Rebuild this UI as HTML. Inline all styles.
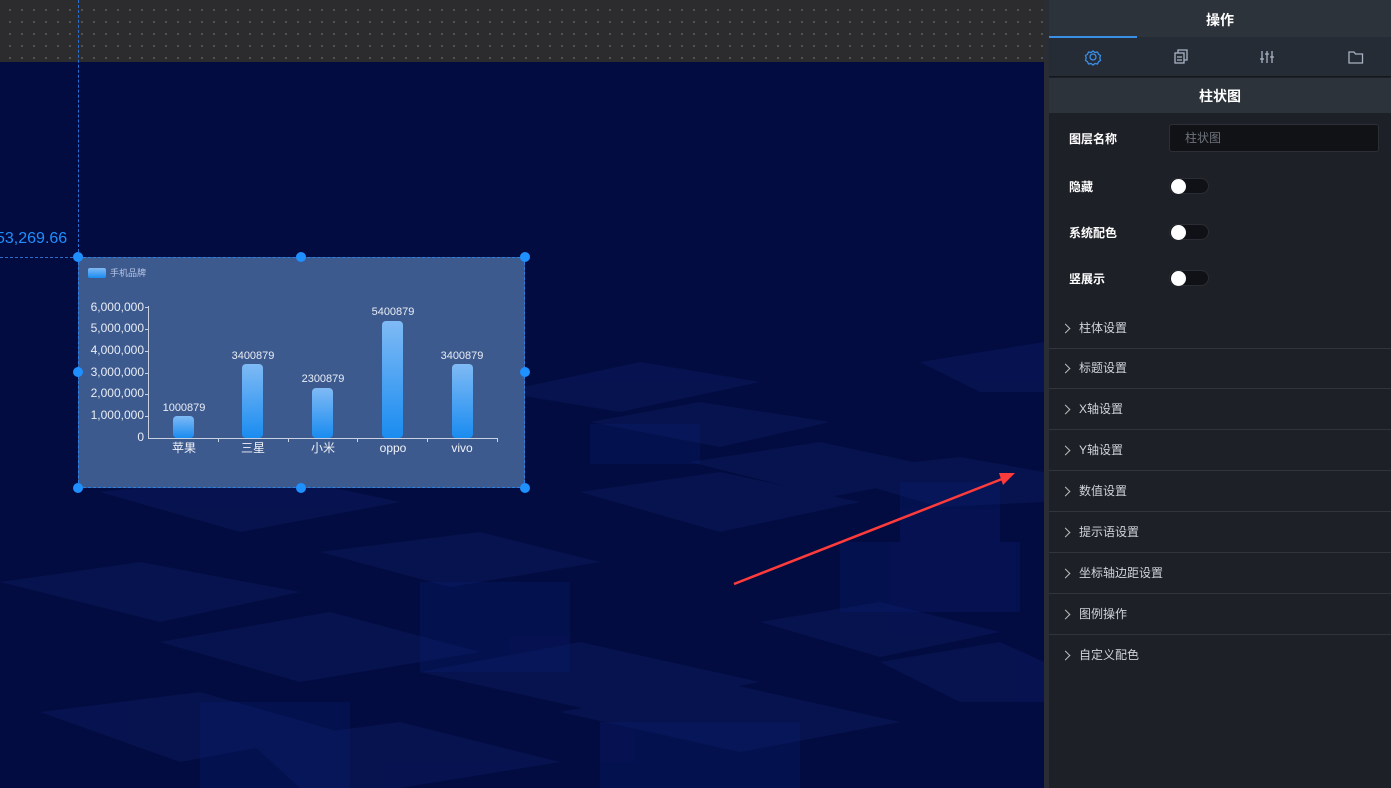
<!DOCTYPE html>
<html><head><meta charset="utf-8"><style>
*{margin:0;padding:0;box-sizing:border-box}
body{width:1391px;height:788px;overflow:hidden;position:relative;background:#030c40;font-family:"Liberation Sans","Noto Sans CJK SC",sans-serif}
.abs{position:absolute}
#top{left:0;top:0;width:1044px;height:62px;background-color:#2c2c2e;background-image:radial-gradient(#555 1px,transparent 1.2px);background-size:12px 12px;background-position:4px 4px}
#strip{left:1044px;top:0;width:5px;height:788px;background:#2a2d33}
#panel{left:1049px;top:0;width:342px;height:788px;background:#1e2027;color:#fff}
.hdr{position:absolute;left:0;top:0;width:342px;height:37px;background:#2d333b;text-align:center;line-height:40px;font-size:14px;font-weight:bold}
.tabs{position:absolute;left:0;top:37px;width:342px;height:40px;background:#262c35;border-bottom:1px solid #15181c}
.sec{position:absolute;left:0;top:78px;width:342px;height:35px;background:#2d333b;text-align:center;line-height:36px;font-size:14px;font-weight:bold}
.lbl{position:absolute;left:20px;font-size:12px;font-weight:bold}
.tog{position:absolute;left:120px;width:40px;height:16px;border-radius:8px;background:#101116;border:1px solid #2a2d33}
.tog:before{content:"";position:absolute;left:1px;top:0;width:15px;height:15px;border-radius:50%;background:#fff}
.row{position:absolute;left:0;width:342px;height:41px;border-bottom:1px solid #30343c;font-size:12px;color:#cfd3da;line-height:41px;padding-left:30px}
.row:before{content:"";position:absolute;left:13px;top:17px;width:6px;height:6px;border-right:1.3px solid #bbb;border-top:1.3px solid #bbb;transform:rotate(45deg)}
.h{position:absolute;width:10px;height:10px;border-radius:50%;background:#1e90ff}
</style></head><body>
<svg class="abs" style="left:0;top:62px" width="1044" height="726">
<g fill="#0a1a5c" opacity=".55">
<polygon points="500,330 640,300 760,320 620,350"/>
<polygon points="590,360 700,340 830,360 720,385"/>
<polygon points="690,400 820,380 960,410 830,435"/>
<polygon points="820,410 960,395 1044,410 1044,440 940,445"/>
<polygon points="0,520 140,500 300,530 160,560"/>
<polygon points="160,580 330,550 480,590 300,620"/>
<polygon points="320,490 480,470 600,500 450,525"/>
<polygon points="420,610 580,580 760,620 600,650"/>
<polygon points="560,650 720,620 900,660 740,690"/>
<polygon points="40,650 200,630 340,670 180,700"/>
<polygon points="250,680 400,660 560,700 400,726 300,726"/>
<polygon points="760,560 880,540 1000,570 880,595"/>
<polygon points="880,600 1000,580 1044,600 1044,640 960,640"/>
<polygon points="100,430 260,410 400,440 240,470"/>
<polygon points="580,430 720,410 860,440 720,470"/>
<polygon points="920,300 1044,280 1044,330 980,330"/>
</g>
<g fill="#0a1d6e" opacity=".35">
<rect x="590" y="362" width="110" height="40"/>
<rect x="900" y="420" width="100" height="60"/>
<rect x="420" y="520" width="150" height="90"/>
<rect x="840" y="480" width="180" height="70"/>
<rect x="200" y="640" width="150" height="86"/>
<rect x="600" y="660" width="200" height="66"/>
</g>
</svg>
<div id="top" class="abs"></div>
<div class="abs" style="left:78px;top:0;width:0;height:257px;border-left:1px dashed #2a6fd0"></div>
<div class="abs" style="left:0;top:257px;width:78px;height:0;border-top:1px dashed #2a6fd0"></div>
<div class="abs" style="left:-4px;top:230px;color:#1e8fff;font-size:16px">53,269.66</div>
<div class="abs" style="left:78px;top:257px;width:447px;height:231px;background:#3d5a8e;border:1px dashed #2a7fe0"></div>
<svg class="abs" style="left:0;top:0" width="600" height="500" font-family="Liberation Sans,Noto Sans CJK SC,sans-serif">
<defs><linearGradient id="g" x1="0" y1="0" x2="0" y2="1"><stop offset="0" stop-color="#7fbaf5"/><stop offset="1" stop-color="#1a8cf0"/></linearGradient></defs>
<rect x="88" y="268" width="18" height="10" rx="2" fill="url(#g)"/>
<text x="110" y="276" font-size="9" fill="#b8c8e8">手机品牌</text>
<g font-size="12" fill="#e8edf5" text-anchor="end">
<text x="144" y="311">6,000,000</text><text x="144" y="332">5,000,000</text><text x="144" y="354">4,000,000</text><text x="144" y="376">3,000,000</text><text x="144" y="397">2,000,000</text><text x="144" y="419">1,000,000</text><text x="144" y="441">0</text></g>
<g stroke="#c8d2e0"><line x1="148.5" y1="306" x2="148.5" y2="438"/><line x1="148" y1="438.5" x2="497" y2="438.5"/>
<line x1="145" y1="307.5" x2="148" y2="307.5"/><line x1="145" y1="329.5" x2="148" y2="329.5"/><line x1="145" y1="351.5" x2="148" y2="351.5"/><line x1="145" y1="373.5" x2="148" y2="373.5"/><line x1="145" y1="394.5" x2="148" y2="394.5"/><line x1="145" y1="416.5" x2="148" y2="416.5"/>
<line x1="218.5" y1="438" x2="218.5" y2="442"/><line x1="288.5" y1="438" x2="288.5" y2="442"/><line x1="357.5" y1="438" x2="357.5" y2="442"/><line x1="427.5" y1="438" x2="427.5" y2="442"/><line x1="497.5" y1="438" x2="497.5" y2="442"/></g>
<g fill="url(#g)"><rect x="173" y="416" width="21" height="22" rx="4"/><rect x="242" y="364" width="21" height="74" rx="4"/><rect x="312" y="388" width="21" height="50" rx="4"/><rect x="382" y="321" width="21" height="117" rx="4"/><rect x="452" y="364" width="21" height="74" rx="4"/></g>
<g font-size="11" fill="#e8edf5" text-anchor="middle"><text x="184" y="411">1000879</text><text x="253" y="359">3400879</text><text x="323" y="382">2300879</text><text x="393" y="315">5400879</text><text x="462" y="359">3400879</text></g>
<g font-size="12" fill="#f0f3f8" text-anchor="middle"><text x="184" y="452">苹果</text><text x="253" y="452">三星</text><text x="323" y="452">小米</text><text x="393" y="452">oppo</text><text x="462" y="452">vivo</text></g>
</svg>
<div class="h" style="left:73px;top:252px"></div><div class="h" style="left:296px;top:252px"></div><div class="h" style="left:520px;top:252px"></div>
<div class="h" style="left:73px;top:367px"></div><div class="h" style="left:520px;top:367px"></div>
<div class="h" style="left:73px;top:483px"></div><div class="h" style="left:296px;top:483px"></div><div class="h" style="left:520px;top:483px"></div>
<svg class="abs" style="left:0;top:0" width="1044" height="788"><line x1="734" y1="584" x2="1002" y2="479" stroke="#ff3b3b" stroke-width="2.5"/><polygon points="1015,473 999,473 1003,485" fill="#ff3b3b"/></svg>
<div id="strip" class="abs"></div>
<div id="panel" class="abs">
<div class="hdr">操作</div>
<div class="tabs">
<div style="position:absolute;left:0;top:-1px;width:88px;height:2px;background:#3a8ee6"></div>
<svg style="position:absolute;left:0;top:0" width="342" height="40" fill="none" stroke-width="1.3">
<g stroke="#3a8ee6"><circle cx="44" cy="20" r="3"/><path d="M44 14l2 1.5 2.5-.5 1 2.3 2 1.2-.7 2.5.7 2.5-2 1.2-1 2.3-2.5-.5-2 1.5-2-1.5-2.5.5-1-2.3-2-1.2.7-2.5-.7-2.5 2-1.2 1-2.3 2.5.5z"/></g>
<g stroke="#a8b4c4"><rect x="126" y="16" width="9" height="10"/><path d="M129 16v-3h9v10h-3M128 20h5M128 23h5"/>
<path d="M213 14v12M218 14v12M223 14v12"/><path d="M211 22h4M216 17h4M221 20h4"/>
<path d="M300 15h5l1.5 2h7v9h-13.5z"/></g></svg>
</div>
<div class="sec">柱状图</div>
<div class="lbl" style="top:130px">图层名称</div>
<div style="position:absolute;left:120px;top:124px;width:210px;height:28px;background:#111216;border:1px solid #2c2f36;border-radius:3px;color:#6d737c;font-size:12px;line-height:26px;padding-left:15px">柱状图</div>
<div class="lbl" style="top:178px">隐藏</div><div class="tog" style="top:178px"></div>
<div class="lbl" style="top:224px">系统配色</div><div class="tog" style="top:224px"></div>
<div class="lbl" style="top:270px">竖展示</div><div class="tog" style="top:270px"></div>
<div class="row" style="top:308px">柱体设置</div>
<div class="row" style="top:348px">标题设置</div>
<div class="row" style="top:389px">X轴设置</div>
<div class="row" style="top:430px">Y轴设置</div>
<div class="row" style="top:471px">数值设置</div>
<div class="row" style="top:512px">提示语设置</div>
<div class="row" style="top:553px">坐标轴边距设置</div>
<div class="row" style="top:594px">图例操作</div>
<div class="row" style="top:635px;border-bottom:none">自定义配色</div>
</div>
</body></html>
